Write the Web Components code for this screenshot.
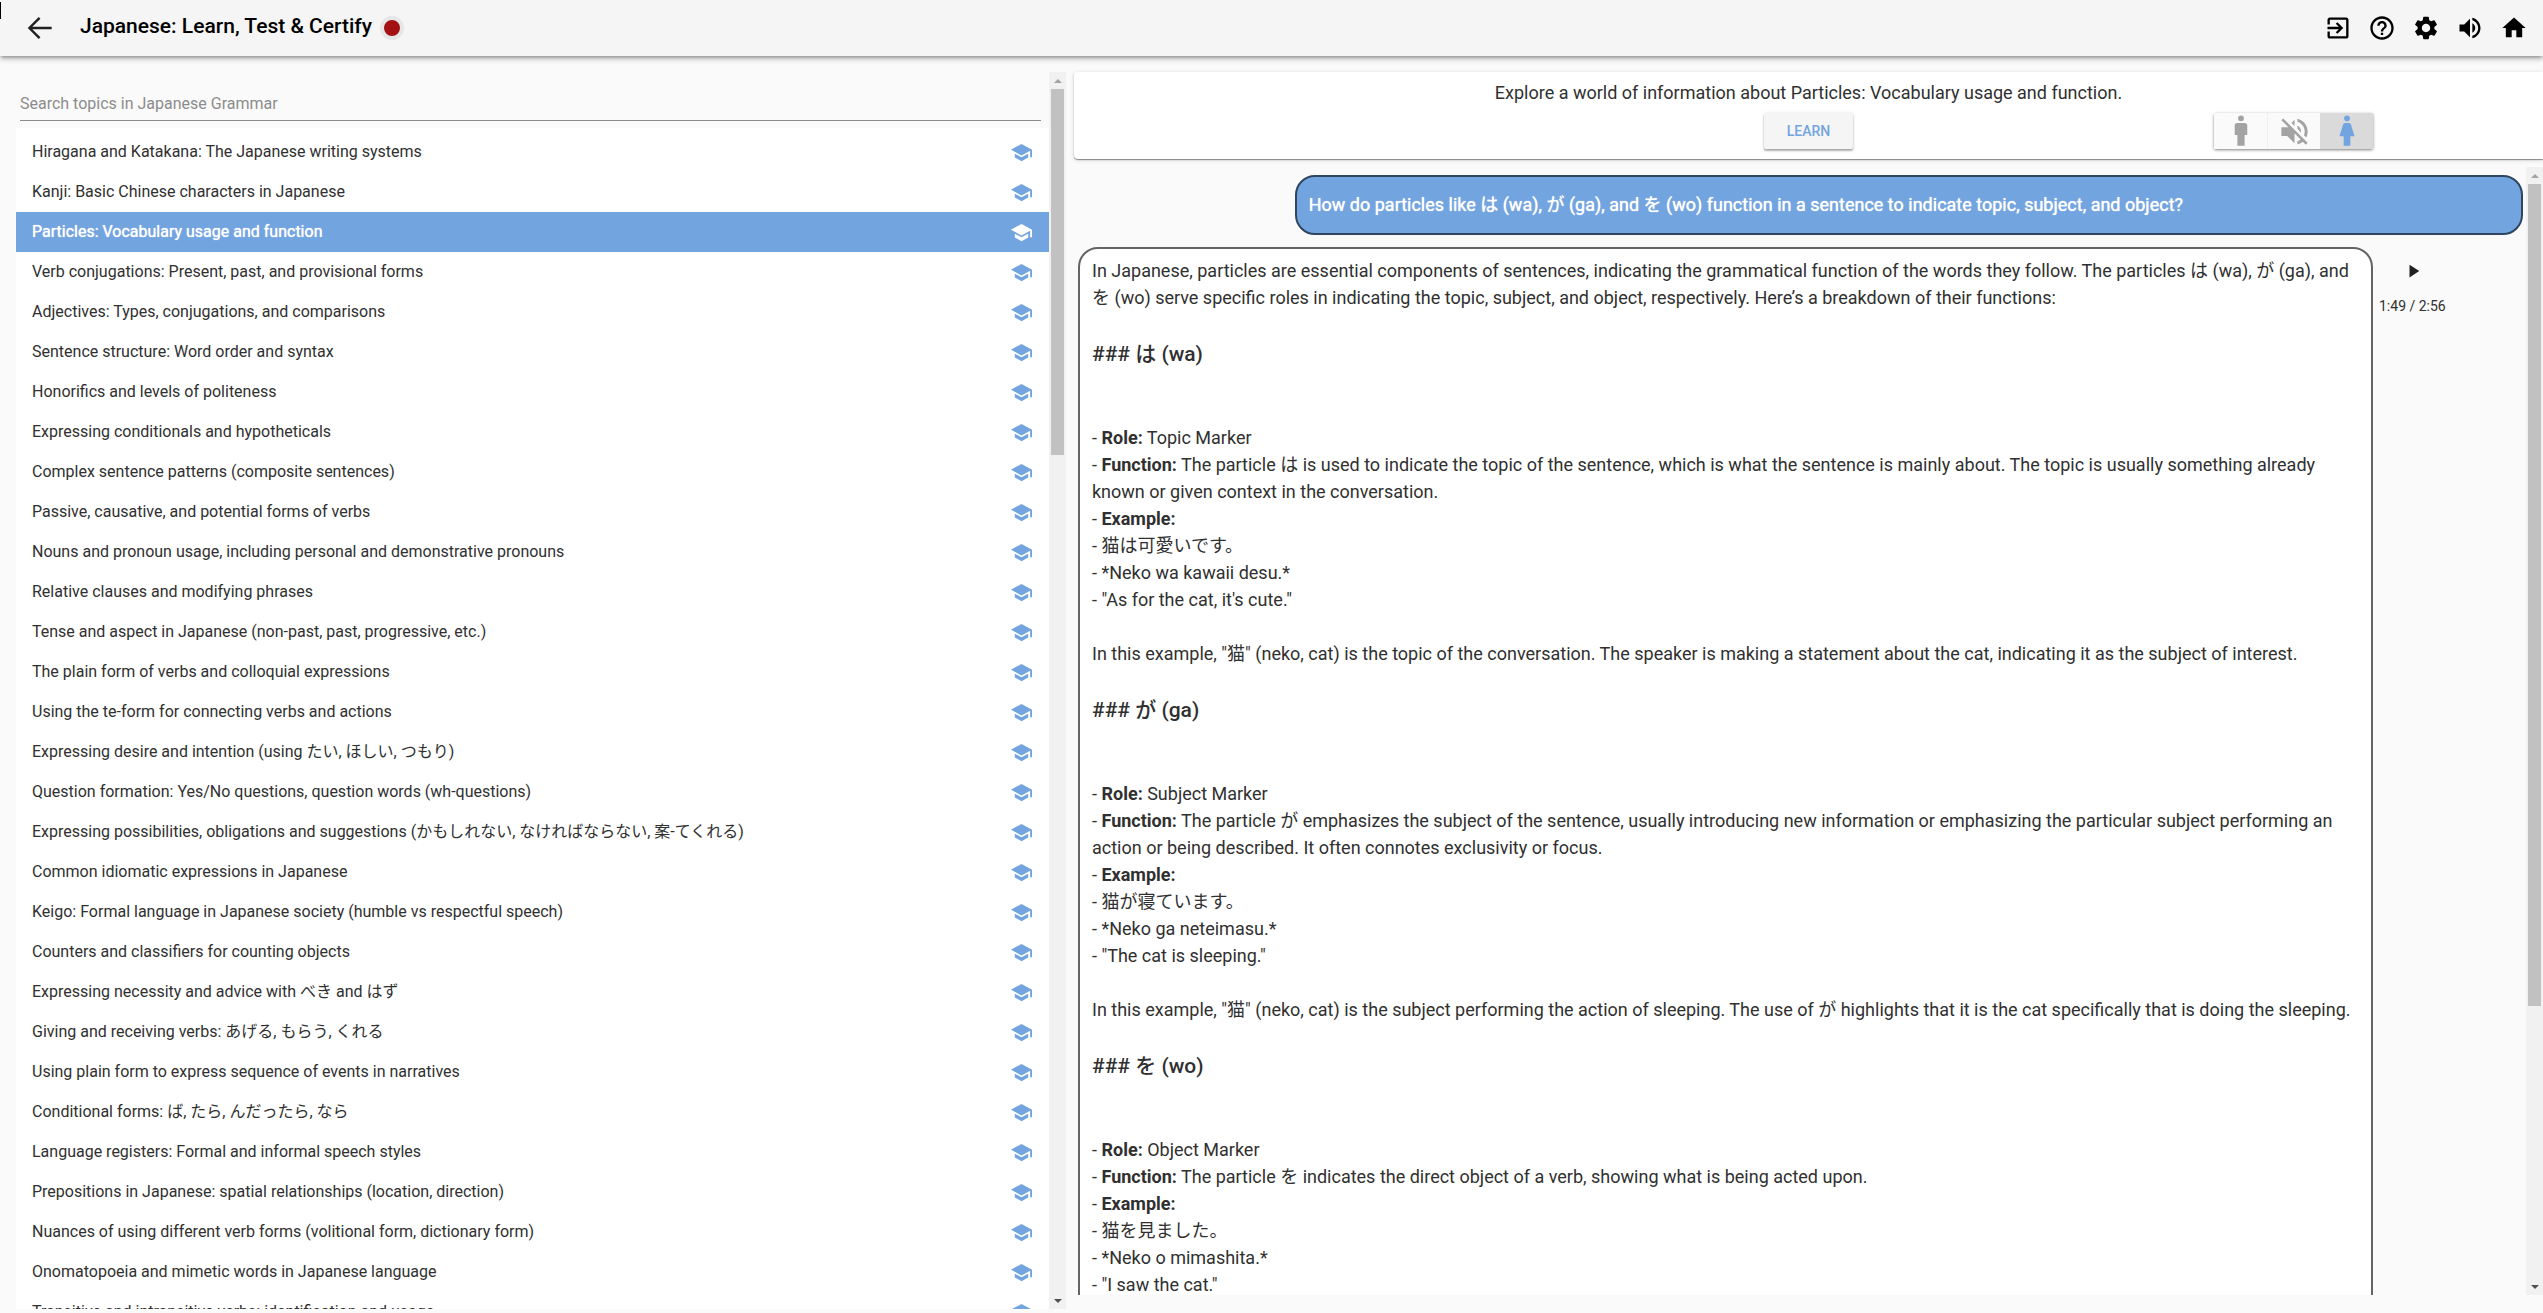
<!DOCTYPE html>
<html lang="en">
<head>
<meta charset="utf-8">
<title>Japanese: Learn, Test &amp; Certify</title>
<style>
html, body { margin: 0; height: 100%; }
body { font-family: Roboto, "Noto Sans CJK JP", sans-serif; font-size: 16px; color: #303030; background: #fafafa; overflow: hidden; }
</style>
</head>
<body>
<learn-app>
  <app-header slot="header" heading="Japanese: Learn, Test &amp; Certify"></app-header>
  <topic-panel slot="topics" label="Search topics in Japanese Grammar">
    <topic-item>Hiragana and Katakana: The Japanese writing systems</topic-item>
    <topic-item>Kanji: Basic Chinese characters in Japanese</topic-item>
    <topic-item selected>Particles: Vocabulary usage and function</topic-item>
    <topic-item>Verb conjugations: Present, past, and provisional forms</topic-item>
    <topic-item>Adjectives: Types, conjugations, and comparisons</topic-item>
    <topic-item>Sentence structure: Word order and syntax</topic-item>
    <topic-item>Honorifics and levels of politeness</topic-item>
    <topic-item>Expressing conditionals and hypotheticals</topic-item>
    <topic-item>Complex sentence patterns (composite sentences)</topic-item>
    <topic-item>Passive, causative, and potential forms of verbs</topic-item>
    <topic-item>Nouns and pronoun usage, including personal and demonstrative pronouns</topic-item>
    <topic-item>Relative clauses and modifying phrases</topic-item>
    <topic-item>Tense and aspect in Japanese (non-past, past, progressive, etc.)</topic-item>
    <topic-item>The plain form of verbs and colloquial expressions</topic-item>
    <topic-item>Using the te-form for connecting verbs and actions</topic-item>
    <topic-item>Expressing desire and intention (using たい, ほしい, つもり)</topic-item>
    <topic-item>Question formation: Yes/No questions, question words (wh-questions)</topic-item>
    <topic-item>Expressing possibilities, obligations and suggestions (かもしれない, なければならない, 案-てくれる)</topic-item>
    <topic-item>Common idiomatic expressions in Japanese</topic-item>
    <topic-item>Keigo: Formal language in Japanese society (humble vs respectful speech)</topic-item>
    <topic-item>Counters and classifiers for counting objects</topic-item>
    <topic-item>Expressing necessity and advice with べき and はず</topic-item>
    <topic-item>Giving and receiving verbs: あげる, もらう, くれる</topic-item>
    <topic-item>Using plain form to express sequence of events in narratives</topic-item>
    <topic-item>Conditional forms: ば, たら, んだったら, なら</topic-item>
    <topic-item>Language registers: Formal and informal speech styles</topic-item>
    <topic-item>Prepositions in Japanese: spatial relationships (location, direction)</topic-item>
    <topic-item>Nuances of using different verb forms (volitional form, dictionary form)</topic-item>
    <topic-item>Onomatopoeia and mimetic words in Japanese language</topic-item>
    <topic-item>Transitive and intransitive verbs: identification and usage</topic-item>
  </topic-panel>
  <lesson-card slot="lesson">Explore a world of information about Particles: Vocabulary usage and function.</lesson-card>
  <chat-question slot="chat">How do particles like は (wa), が (ga), and を (wo) function in a sentence to indicate topic, subject, and object?</chat-question>
  <chat-answer slot="chat" time="1:49 / 2:56">
    <p-line>In Japanese, particles are essential components of sentences, indicating the grammatical function of the words they follow. The particles は (wa), が (ga), and を (wo) serve specific roles in indicating the topic, subject, and object, respectively. Here’s a breakdown of their functions:</p-line>
    <p-head>### は (wa)</p-head>
    <p-line>- <b>Role:</b> Topic Marker</p-line>
    <p-line>- <b>Function:</b> The particle は is used to indicate the topic of the sentence, which is what the sentence is mainly about. The topic is usually something already known or given context in the conversation.</p-line>
    <p-line>- <b>Example:</b></p-line>
    <p-line>- 猫は可愛いです。</p-line>
    <p-line>- *Neko wa kawaii desu.*</p-line>
    <p-line>- "As for the cat, it's cute."</p-line>
    <p-line spaced>In this example, "猫" (neko, cat) is the topic of the conversation. The speaker is making a statement about the cat, indicating it as the subject of interest.</p-line>
    <p-head>### が (ga)</p-head>
    <p-line>- <b>Role:</b> Subject Marker</p-line>
    <p-line>- <b>Function:</b> The particle が emphasizes the subject of the sentence, usually introducing new information or emphasizing the particular subject performing an action or being described. It often connotes exclusivity or focus.</p-line>
    <p-line>- <b>Example:</b></p-line>
    <p-line>- 猫が寝ています。</p-line>
    <p-line>- *Neko ga neteimasu.*</p-line>
    <p-line>- "The cat is sleeping."</p-line>
    <p-line spaced>In this example, "猫" (neko, cat) is the subject performing the action of sleeping. The use of が highlights that it is the cat specifically that is doing the sleeping.</p-line>
    <p-head>### を (wo)</p-head>
    <p-line>- <b>Role:</b> Object Marker</p-line>
    <p-line>- <b>Function:</b> The particle を indicates the direct object of a verb, showing what is being acted upon.</p-line>
    <p-line>- <b>Example:</b></p-line>
    <p-line>- 猫を見ました。</p-line>
    <p-line>- *Neko o mimashita.*</p-line>
    <p-line>- "I saw the cat."</p-line>
  </chat-answer>
</learn-app>
<script>
const ICONS = {
  back: '<path d="M22 11H5.400l7-7L10.900 2.500 1.500 12l9.400 9.500 1.500-1.500-7-7H22z"/>',
  exit: '<path d="M10.090 15.590L11.500 17l5-5-5-5-1.410 1.410L12.670 11H3v2h9.670l-2.580 2.590zM19 3H5c-1.110 0-2 .9-2 2v4h2V5h14v14H5v-4H3v4c0 1.100.89 2 2 2h14c1.100 0 2-.9 2-2V5c0-1.100-.9-2-2-2z"/>',
  help: '<path d="M11 18h2v-2h-2v2zm1-16C6.480 2 2 6.480 2 12s4.480 10 10 10 10-4.480 10-10S17.520 2 12 2zm0 18c-4.410 0-8-3.590-8-8s3.590-8 8-8 8 3.590 8 8-3.590 8-8 8zm0-14c-2.210 0-4 1.790-4 4h2c0-1.100.9-2 2-2s2 .9 2 2c0 2-3 1.750-3 5h2c0-2.250 3-2.500 3-5 0-2.210-1.790-4-4-4z"/>',
  settings: '<path d="M19.140 12.940c.04-.3.06-.61.06-.94 0-.32-.02-.64-.07-.94l2.030-1.580c.18-.14.23-.41.12-.61l-1.920-3.320c-.12-.22-.37-.29-.59-.22l-2.390.96c-.5-.38-1.030-.7-1.620-.94l-.36-2.540c-.04-.24-.24-.41-.48-.41h-3.840c-.24 0-.43.17-.47.41l-.36 2.540c-.59.24-1.130.57-1.620.94l-2.390-.96c-.22-.08-.47 0-.59.22L2.740 8.870c-.12.21-.08.47.12.61l2.030 1.580c-.05.3-.09.63-.09.94s.02.64.07.94l-2.030 1.580c-.18.14-.23.41-.12.61l1.920 3.320c.12.22.37.29.59.22l2.390-.96c.5.38 1.030.7 1.620.94l.36 2.540c.05.24.24.41.48.41h3.840c.24 0 .44-.17.47-.41l.36-2.540c.59-.24 1.130-.56 1.620-.94l2.390.96c.22.08.47 0 .59-.22l1.920-3.320c.12-.22.07-.47-.12-.61l-2.010-1.580zM12 15.600c-1.980 0-3.600-1.620-3.600-3.600s1.620-3.600 3.600-3.600 3.600 1.620 3.600 3.600-1.620 3.600-3.600 3.600z"/>',
  volume: '<path d="M3 9v6h4l5 5V4L7 9H3zm13.500 3c0-1.770-1.020-3.290-2.500-4.030v8.050c1.480-.73 2.500-2.250 2.500-4.020zM14 3.230v2.060c2.890.86 5 3.540 5 6.710s-2.110 5.850-5 6.710v2.060c4.010-.91 7-4.490 7-8.770s-2.990-7.860-7-8.770z"/>',
  home: '<path d="M10 20v-6h4v6h5v-8h3L12 3 2 12h3v8z"/>',
  school: '<path d="M5 13.180v4L12 21l7-3.820v-4L12 17l-7-3.820zM12 3L1 9l11 6 9-4.910V17h2V9L12 3z"/>',
  man: '<circle cx="12" cy="2.500" r="2.200"/><path d="M9.200 6h5.600a1.900 1.900 0 0 1 1.900 1.900V15H14.700v8H9.300v-8H7.300V7.900A1.900 1.900 0 0 1 9.200 6z"/>',
  mute: '<path d="M16.500 12c0-1.770-1.020-3.290-2.500-4.030v2.210l2.450 2.450c.03-.2.05-.41.05-.63zm2.500 0c0 .94-.2 1.820-.54 2.640l1.510 1.510C20.630 14.910 21 13.500 21 12c0-4.280-2.990-7.860-7-8.770v2.060c2.890.86 5 3.540 5 6.710zM4.270 3L3 4.270 7.730 9H3v6h4l5 5v-6.730l4.250 4.250c-.67.52-1.420.93-2.250 1.180v2.060c1.380-.31 2.630-.95 3.690-1.810L19.730 21 21 19.730l-9-9L4.270 3zM12 4L9.910 6.090 12 8.180V4z"/>',
  woman: '<circle cx="12" cy="2.500" r="2.200"/><path d="M10.700 6h2.600c.9 0 1.400.5 1.700 1.300L17.700 16h-3.200v7h-5v-7H6.300L9 7.300C9.300 6.500 9.800 6 10.700 6z"/>',
  play: '<path d="M6 3.500v17l13-8.500z"/>'
};
function define(name, html, setup) {
  const template = document.createElement('template');
  template.innerHTML = html;
  customElements.define(name, class extends HTMLElement {
    constructor() {
      super();
      this.attachShadow({ mode: 'open' }).append(template.content.cloneNode(true));
    }
    connectedCallback() { if (setup) setup(this, this.shadowRoot); }
  });
}

define('app-icon', `<style>
:host { display: inline-flex; width: 28px; height: 28px; flex: none; }
svg { width: 100%; height: 100%; fill: currentColor; }
</style><svg viewBox="0 0 24 24" aria-hidden="true"></svg>`,
(el, root) => { root.querySelector('svg').innerHTML = ICONS[el.getAttribute('name')]; });

define('scroll-bar', `<style>
:host { display: flex; flex-direction: column; flex: none; width: 17px; background: #f1f1f1; }
i { height: 17px; flex: none; display: grid; place-items: center; }
i::before { content: ""; border: 4px solid transparent; border-top: 0; border-bottom-color: #a3a3a3; }
i.down::before { border: 4px solid transparent; border-bottom: 0; border-top-color: #505050; }
.track { flex: 1; padding: 0 2px; }
.thumb { height: var(--thumb); background: #c1c1c1; }
</style><i></i><div class="track"><div class="thumb"></div></div><i class="down"></i>`);

define('app-header', `<style>
:host { display: flex; align-items: center; justify-content: space-between; height: 56px; padding: 0 7px 0 20px; box-sizing: border-box; background: #f5f5f5; box-shadow: 0 2px 4px -1px rgba(0,0,0,.4), 0 4px 5px rgba(0,0,0,.14); color: #000; position: relative; }
:host::before { content: ""; position: absolute; left: 0; top: 2px; width: 1px; height: 17px; background: #000; }
button { display: inline-flex; padding: 8px; border: 0; background: none; color: inherit; }
.left, nav { display: flex; align-items: center; }
.back { margin-right: 20px; padding: 6px; color: #212121; }
h1 { margin: 0 8px 4px 0; font-size: 21px; line-height: 24px; font-weight: 500; }
.dot { width: 16px; height: 16px; border-radius: 50%; background: #a31212; border: 4px solid #e6e6e6; }
</style>
<div class="left"><button class="back" aria-label="Back"><app-icon name="back"></app-icon></button><h1></h1><span class="dot"></span></div>
<nav>
<button aria-label="Exit"><app-icon name="exit"></app-icon></button>
<button aria-label="Help"><app-icon name="help"></app-icon></button>
<button aria-label="Settings"><app-icon name="settings"></app-icon></button>
<button aria-label="Sound"><app-icon name="volume"></app-icon></button>
<button aria-label="Home"><app-icon name="home"></app-icon></button>
</nav>`,
(el, root) => { root.querySelector('h1').textContent = el.getAttribute('heading'); });

define('topic-item', `<style>
:host { display: block; }
button { display: flex; align-items: center; justify-content: space-between; width: 100%; height: 40px; padding: 0 16px; border: 0; background: none; font: inherit; line-height: 24px; color: inherit; text-align: left; }
:host([selected]) button { background: #72a4e0; color: #fff; text-shadow: 0 0 1px #fff; }
app-icon { width: 23px; height: 23px; color: #72a4e0; }
:host([selected]) app-icon { color: #fff; }
</style><button><span><slot></slot></span><app-icon name="school"></app-icon></button>`);

define('topic-panel', `<style>
:host { display: flex; min-height: 0; }
.body { flex: 1; min-width: 0; overflow: hidden; padding-left: 16px; }
.search { display: block; margin: 8px 8px 7px 4px; border-bottom: 1px solid #8c8c8c; }
input { display: block; width: 100%; height: 40px; box-sizing: border-box; padding: 6px 0 0; border: 0; outline: 0; background: none; font: inherit; color: inherit; }
input::placeholder { color: #8c8c8c; opacity: 1; }
.list { background: #fff; padding-top: 4px; }
scroll-bar { --thumb: 366px; }
</style>
<div class="body"><label class="search"><input type="text"></label><div class="list"><slot></slot></div></div>
<scroll-bar></scroll-bar>`,
(el, root) => {
  const input = root.querySelector('input');
  input.placeholder = el.getAttribute('label');
  input.setAttribute('aria-label', input.placeholder);
});

define('lesson-card', `<style>
:host { display: block; background: #fff; border-radius: 4px 0 0 4px; box-shadow: 0 1px 1px rgba(0,0,0,.4), 0 1px 4px rgba(0,0,0,.16); padding: 7px 0 10px; }
p { margin: 0 0 7px; font-size: 18px; line-height: 27px; text-align: center; }
.row { display: grid; grid-template-columns: 1fr auto 1fr; align-items: center; }
button { font: inherit; border: 0; height: 36px; }
.learn { grid-column: 2; width: 89px; background: #f5f5f5; color: #72a4e0; font-size: 14px; font-weight: 500; border-radius: 2px; box-shadow: 0 2px 2px rgba(0,0,0,.3), 0 0 3px rgba(0,0,0,.12); }
.voices { justify-self: end; margin-right: 170px; display: flex; box-shadow: 0 1px 3px rgba(0,0,0,.5); border-radius: 2px; }
.voices button { width: 53px; padding: 0; display: grid; place-items: center; background: #fafafa; color: #a3a3a3; }
.voices button + button { border-left: 1px solid #f0f0f0; }
.voices app-icon { width: 32px; height: 32px; }
.voices app-icon[name=mute] { width: 35px; height: 35px; }
.voices .on { background: #dadada; color: #72a4e0; border-left-color: #dadada; }
</style>
<p><slot></slot></p>
<div class="row"><button class="learn">LEARN</button>
<div class="voices"><button aria-label="Male voice"><app-icon name="man"></app-icon></button><button aria-label="Mute"><app-icon name="mute"></app-icon></button><button class="on" aria-label="Female voice"><app-icon name="woman"></app-icon></button></div></div>`);

define('chat-question', `<style>
:host { display: block; margin-left: 15%; padding: 14px 12px 15px; border: 2px solid #2f4560; border-radius: 20px; background: #72a4e0; color: #fff; font-size: 18px; line-height: 27px; text-shadow: 0 0 1px #fff; }
</style><slot></slot>`);

define('p-line', `<style>
:host { display: block; line-height: 27px; }
:host([spaced]) { margin-top: 27px; }
::slotted(b) { font-weight: 700; }
</style><slot></slot>`);

define('p-head', `<style>
:host { display: block; margin: 27px 0 54px; }
h3 { margin: 0; font-size: 21px; line-height: 32px; font-weight: 500; }
</style><h3><slot></slot></h3>`);

define('chat-answer', `<style>
:host { display: flex; font-size: 18px; }
.text { flex: 1; min-width: 0; padding: 8px 12px 62px; border: 2px solid #646464; border-radius: 20px; background: #fff; }
.player { flex: none; width: 144px; padding: 15px 0 0 6px; }
button { display: block; margin-left: 26px; padding: 0; border: 0; background: none; color: #212121; }
app-icon { width: 18px; height: 18px; }
time { display: block; margin-top: 13px; font-size: 14px; line-height: 20px; }
</style><div class="text"><slot></slot></div><div class="player"><button aria-label="Play"><app-icon name="play"></app-icon></button><time></time></div>`,
(el, root) => { root.querySelector('time').textContent = el.getAttribute('time'); });

define('learn-app', `<style>
:host { display: flex; flex-direction: column; height: 100vh; }
main { flex: 1; min-height: 0; display: grid; grid-template-columns: minmax(0, 1066fr) minmax(0, 1469fr); column-gap: 8px; padding: 16px 0 4px; }
.right { display: flex; flex-direction: column; gap: 8px; min-height: 0; padding-bottom: 14px; }
.chat { flex: 1; min-height: 0; display: flex; }
.log { flex: 1; min-width: 0; overflow: hidden; padding: 8px 3px 0 4px; display: flex; flex-direction: column; gap: 12px; }
::slotted(*) { flex: none; }
scroll-bar { --thumb: 822px; }
</style>
<slot name="header"></slot>
<main><slot name="topics"></slot>
<div class="right"><slot name="lesson"></slot><div class="chat"><div class="log"><slot name="chat"></slot></div><scroll-bar></scroll-bar></div></div>
</main>`);
</script>
</body>
</html>
